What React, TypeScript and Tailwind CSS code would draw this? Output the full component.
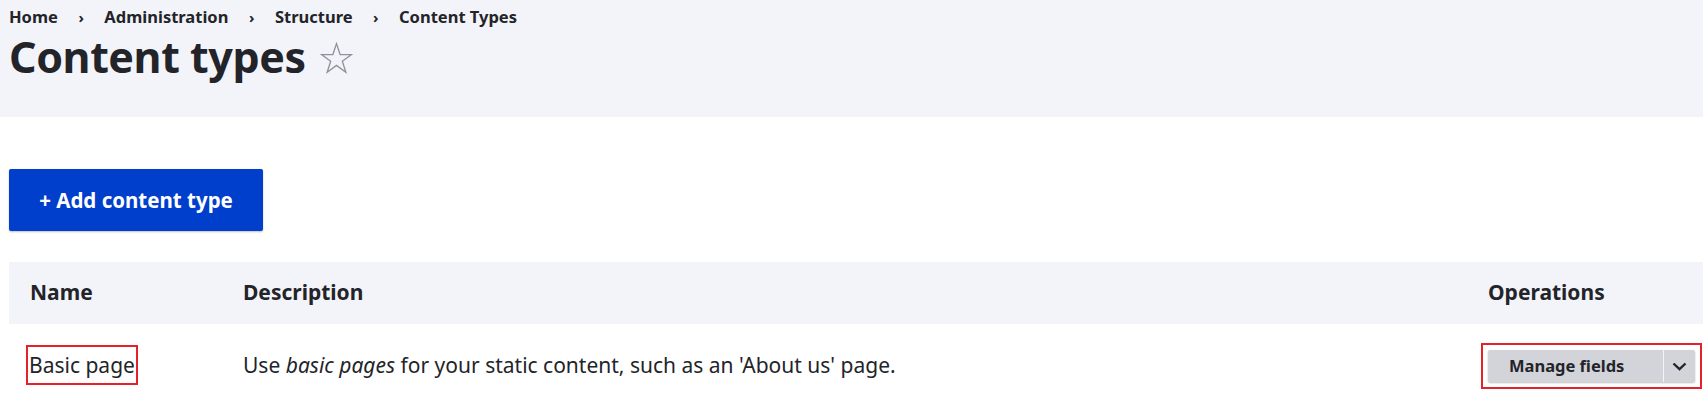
import React from "react";

const crumbs = ["Home", "Administration", "Structure", "Content Types"];

export default function App() {
  return (
    <div className="min-h-screen w-[1703px] overflow-hidden bg-white font-['Noto_Sans',sans-serif] text-[#232429]">
      <header className="h-[117px] bg-[#f3f4f9] pl-[9px]">
        <nav className="flex items-center pt-[5px] text-[16.5px] font-bold leading-[24px]">
          {crumbs.map((c, i) => (
            <React.Fragment key={c}>
              {i > 0 ? <span className="px-[20.5px] text-[15px]">›</span> : null}
              <span>{c}</span>
            </React.Fragment>
          ))}
        </nav>
        <div className="mt-[4px] flex items-center gap-[14px]">
          <h1 className="text-[43px] font-bold leading-[48px] tracking-[-0.01em]">Content types</h1>
          <StarIcon />
        </div>
      </header>

      <main className="pl-[9px]">
        <div className="pt-[52px]">
          <button
            type="button"
            className="flex h-[62px] w-[254px] items-center justify-center rounded-[2px] bg-[#003ecc] text-[20.5px] font-bold text-white shadow-[0_1px_2px_rgba(0,0,0,0.25)]"
          >
            + Add content type
          </button>
        </div>

        <div className="mt-[31px] w-[1694px]">
          <div className="grid h-[62px] grid-cols-[213px_1245px_1fr] items-center bg-[#f3f4f9] text-[21px] font-bold">
            <div className="pl-[21px]">Name</div>
            <div className="pl-[21px]">Description</div>
            <div className="pl-[21px]">Operations</div>
          </div>
          <div className="grid grid-cols-[213px_1245px_1fr] items-start pt-[21px] text-[21px] leading-[32px]">
            <div className="pl-[17px]">
              <span className="inline-block border-2 border-[#e3222c] px-[1px] py-[2px] leading-[32px]">
                Basic page
              </span>
            </div>
            <div className="pl-[21px] pt-[4px]">
              Use <em>basic pages</em> for your static content, such as an 'About us' page.
            </div>
            <div className="pl-[14px]">
              <div className="-mt-[2px] inline-block border-2 border-[#e3222c] px-[5px] py-[5px]">
                <div className="flex h-[32px] w-[207px] rounded-[2px] bg-[#d3d4d9] shadow-[0_1px_2px_rgba(0,0,0,0.25)]">
                  <span className="flex w-[175px] items-center pl-[21px] text-[16.5px] font-bold leading-none">
                    Manage fields
                  </span>
                  <span className="w-px bg-[#f3f4f9]" />
                  <span className="flex flex-1 items-center justify-center">
                    <svg width="15" height="9" viewBox="0 0 15 9" fill="none">
                      <path d="M1.5 1.5 L7.5 7.2 L13.5 1.5" stroke="#232429" strokeWidth="2.4" />
                    </svg>
                  </span>
                </div>
              </div>
            </div>
          </div>
        </div>
      </main>
    </div>
  );
}

function StarIcon() {
  return (
    <svg width="33" height="33" viewBox="0 0 30 30" fill="none" className="mt-[3px]">
      <polygon
        points="15,1.5 18.3,11.4 28.7,11.4 20.3,17.5 23.5,27.5 15,21.3 6.5,27.5 9.7,17.5 1.3,11.4 11.7,11.4"
        stroke="#8e929c"
        strokeWidth="1.2"
        strokeLinejoin="miter"
      />
    </svg>
  );
}
